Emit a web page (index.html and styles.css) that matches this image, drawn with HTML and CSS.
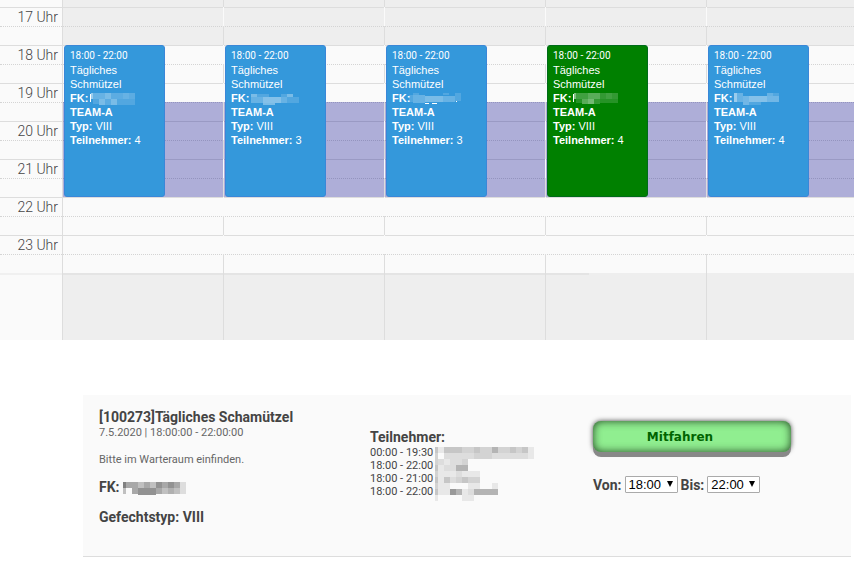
FILE: index.html
```
<!DOCTYPE html>
<html lang="de">

<head>
  <meta charset="UTF-8">
  <meta name="viewport" content="width=device-width, initial-scale=1.0">
  <title>Kalender</title>
  <link rel="stylesheet" href="styles.css">
</head>

<body>
  <div class="calendar">
    <div class="slats">
      <div class="slat rest closed"></div>
      <div class="slat closed"><div class="axis">17 Uhr</div></div>
      <div class="slat"><div class="axis">18 Uhr</div></div>
      <div class="slat"><div class="axis">19 Uhr</div></div>
      <div class="slat"><div class="axis">20 Uhr</div></div>
      <div class="slat"><div class="axis">21 Uhr</div></div>
      <div class="slat"><div class="axis">22 Uhr</div></div>
      <div class="slat"><div class="axis">23 Uhr</div></div>
      <div class="filler"></div>
    </div>
    <hr class="divider">

    <div class="columns">
      <div class="column">
        <div class="bgEvent"></div>
        <a class="event" href="#details">
          <div class="time">18:00 - 22:00</div>
          <div>Tägliches Schmützel</div>
          <div class="leader"><b>FK:</b>
            <svg class="mask" width="45" height="12" viewBox="0 0 45 12" fill="#fff" shape-rendering="crispEdges">
              <path d="M0 1h1v8h-1z" />
              <path d="M1 0h2v6h-2z" opacity=".5" />
              <path d="M3 0h12v6h-12zM33 0h6v6h-6z" opacity=".25" />
              <path d="M15 0h6v6h-6zM9 6h6v6h-6zM21 6h6v6h-6z" opacity=".35" />
              <path d="M21 0h12v6h-12zM15 6h6v6h-6zM39 0h6v6h-6z" opacity=".2" />
              <path d="M3 6h6v5h-6zM27 6h18v6h-18z" opacity=".15" />
            </svg>
          </div>
          <div><b>TEAM-A</b></div>
          <div><b>Typ:</b> VIII</div>
          <div><b>Teilnehmer:</b> 4</div>
        </a>
      </div>
      <div class="column">
        <div class="bgEvent"></div>
        <a class="event" href="#details">
          <div class="time">18:00 - 22:00</div>
          <div>Tägliches Schmützel</div>
          <div class="leader"><b>FK:</b>
            <svg class="mask" width="48" height="12" viewBox="0 0 48 12" fill="#fff" shape-rendering="crispEdges">
              <path d="M0 1h6v3h-6zM36 1h6v3h-6z" opacity=".35" />
              <path d="M0 4h12v6h-12zM30 4h6v6h-6z" opacity=".25" />
              <path d="M12 4h18v6h-18z" opacity=".4" />
              <path d="M36 4h12v6h-12zM6 1h12v3h-12zM30 1h6v3h-6z" opacity=".15" />
              <path d="M12 10h12v2h-12z" opacity=".35" />
            </svg>
          </div>
          <div><b>TEAM-A</b></div>
          <div><b>Typ:</b> VIII</div>
          <div><b>Teilnehmer:</b> 3</div>
        </a>
      </div>
      <div class="column">
        <div class="bgEvent"></div>
        <a class="event" href="#details">
          <div class="time">18:00 - 22:00</div>
          <div>Tägliches Schmützel</div>
          <div class="leader"><b>FK:</b><svg class="mask" width="52" height="12" viewBox="0 0 52 12" fill="#fff" shape-rendering="crispEdges">
              <path d="M0 2h4v7h-4zM4 0h6v2h-6zM34 0h6v2h-6zM46 0h6v8h-6z" opacity=".15" />
              <path d="M4 2h12v8h-12zM34 3h12v6h-12z" opacity=".25" />
              <path d="M16 3h18v6h-18z" opacity=".35" />
              <path d="M16 10h4v1h-4zM23 10h5v1h-5zM47 8h1v1h-1z" />
            </svg>
          </div>
          <div><b>TEAM-A</b></div>
          <div><b>Typ:</b> VIII</div>
          <div><b>Teilnehmer:</b> 3</div>
        </a>
      </div>
      <div class="column">
        <div class="bgEvent"></div>
        <a class="event joined" href="#details">
          <div class="time">18:00 - 22:00</div>
          <div>Tägliches Schmützel</div>
          <div class="leader"><b>FK:</b>
            <svg class="mask" width="45" height="12" viewBox="0 0 45 12" fill="#fff" shape-rendering="crispEdges">
              <path d="M0 1h1v8h-1z" />
              <path d="M1 0h2v6h-2z" opacity=".5" />
              <path d="M3 0h12v6h-12zM33 0h6v6h-6z" opacity=".25" />
              <path d="M15 0h12v6h-12zM9 6h6v5h-6z" opacity=".35" />
              <path d="M27 0h6v6h-6zM21 6h6v5h-6zM39 0h6v6h-6z" opacity=".2" />
              <path d="M15 6h6v5h-6z" opacity=".45" />
              <path d="M3 6h6v4h-6zM27 6h18v4h-18z" opacity=".15" />
            </svg>
          </div>
          <div><b>TEAM-A</b></div>
          <div><b>Typ:</b> VIII</div>
          <div><b>Teilnehmer:</b> 4</div>
        </a>
      </div>
      <div class="column">
        <div class="bgEvent"></div>
        <a class="event" href="#details">
          <div class="time">18:00 - 22:00</div>
          <div>Tägliches Schmützel</div>
          <div class="leader"><b>FK:</b>
            <svg class="mask" width="45" height="12" viewBox="0 0 45 12" fill="#fff" shape-rendering="crispEdges">
              <path d="M0 0h3v9h-3z" opacity=".5" />
              <path d="M3 0h6v9h-6zM33 0h6v3h-6z" opacity=".25" />
              <path d="M9 3h6v9h-6zM33 3h12v6h-12z" opacity=".3" />
              <path d="M15 3h18v6h-18z" opacity=".4" />
              <path d="M15 9h12v3h-12zM39 0h6v3h-6z" opacity=".15" />
            </svg>
          </div>
          <div><b>TEAM-A</b></div>
          <div><b>Typ:</b> VIII</div>
          <div><b>Teilnehmer:</b> 4</div>
        </a>
      </div>
    </div>
  </div>

  <div id="details" class="details">
    <div class="info">
      <h3>[100273]Tägliches Schamützel</h3>
      <div class="date">7.5.2020 | 18:00:00 - 22:00:00</div>
      <p class="note">Bitte im Warteraum einfinden.</p>
      <h3>FK:
        <svg class="nameMask" width="63" height="13" viewBox="0 0 63 13" shape-rendering="crispEdges">
          <path fill="#808080" d="M0 0h3v6h-3z" />
          <path fill="#a8a8a8" d="M3 0h12v6h-12zM21 0h6v6h-6zM39 0h6v6h-6zM51 0h6v6h-6zM9 6h6v6h-6zM33 6h6v6h-6z" />
          <path fill="#c0c0c0" d="M15 0h6v6h-6zM27 0h6v6h-6zM39 6h6v6h-6zM0 6h3v6h-3zM51 6h6v6h-6z" />
          <path fill="#929292" d="M33 0h6v6h-6zM45 0h6v6h-6zM15 6h18v7h-18z" />
          <path fill="#b0b0b0" d="M45 6h6v6h-6z" />
          <path fill="#ddd" d="M57 0h6v12h-6z" />
        </svg>
      </h3>
      <h3>Gefechtstyp: VIII</h3>
    </div>

    <div class="members">
      <h3>Teilnehmer:</h3>
      <div class="memberList">
        <ul>
          <li>00:00 - 19:30</li>
          <li>18:00 - 22:00</li>
          <li>18:00 - 21:00</li>
          <li>18:00 - 22:00</li>
        </ul>
        <svg width="99" height="54" viewBox="0 0 99 54" fill="none" stroke-width="6" shape-rendering="crispEdges">
          <path stroke="#e8e8e8" d="M3 3h6M93 3h6M93 9h6M9 15h6M3 21h6M3 27h18M27 27h18M3 33h6M3 39h6M9 39h6M33 39h12M57 39h6M3 45h6M9 45h6M27 45h6M0 51h3M27 51h12" />
          <path stroke="#ddd" d="M9 9h12M21 9h18M57 9h36M15 15h12M9 21h12M21 27h6M15 33h6M33 45h6M3 15h6" />
          <path stroke="#d3d3d3" d="M0 9h3M27 3h12M45 3h12M63 3h6M69 3h6M81 3h6M39 9h18M27 15h6M0 15h3M21 33h6M33 33h12M0 27h3M0 39h3" />
          <path stroke="#c6c6c6" d="M0 3h3M9 3h18M39 3h6M75 3h6M87 3h6M0 21h3M9 33h6M27 33h6M0 33h3M0 45h3" />
          <path stroke="#b4b4b4" d="M57 3h6M21 21h12M39 45h24M21 45h6" />
          <path stroke="#999" d="M15 45h6" />
        </svg>
      </div>
    </div>

    <form class="join">
      <button type="button">Mitfahren</button>
      <div class="range">
        <label for="from">Von:</label>
        <span class="selectWrapper"><select id="from"><option>18:00</option></select></span>
        <label for="to">Bis:</label>
        <span class="selectWrapper"><select id="to"><option>22:00</option></select></span>
      </div>
    </form>
  </div>
</body>

</html>
```
FILE: styles.css
```
* {
  box-sizing: border-box;
  padding: 0;
  margin: 0;
}

body {
  color: #444;
  background: #fff;
  font-family: Roboto, 'Liberation Sans', sans-serif;
  font-size: 14px;
}

/* calendar */
.calendar {
  position: relative;
  overflow: hidden;
  background: #fafafa;
}

.slat {
  position: relative;
  height: 38px;
  border-top: 1px solid #ddd;
}

.slat.rest {
  height: 7px;
  border-top: 0;
}

.slat::after {
  content: '';
  position: absolute;
  top: 18px;
  left: 0;
  right: 0;
  border-top: 1px dotted #d4d4d4;
}

.slat.rest::after {
  display: none;
}

.slat.closed,
.filler {
  background: linear-gradient(to right, #fafafa 62px, #eee 62px);
}

.axis {
  width: 62px;
  padding-right: 4px;
  font-weight: 300;
  line-height: 18px;
  text-align: right;
}

.filler {
  height: 67px;
}

.divider {
  position: absolute;
  bottom: 65px;
  left: 0;
  width: 69%;
  height: 2px;
  border: 0;
  background: rgba(0, 0, 0, .04);
}

.columns {
  position: absolute;
  top: 0;
  bottom: 0;
  left: 62px;
  right: -13px;
  display: grid;
  grid-template-columns: repeat(5, 1fr);
}

/* the column line fades out in the first half of every hour */
.column {
  position: relative;
  padding: 45px 58px 0 2px;
  background:
    linear-gradient(#ddd, #ddd) left bottom / 1px 67px no-repeat,
    repeating-linear-gradient(#fafafa 0 19px, #ddd 19px 38px) left 7px / 1px 266px no-repeat,
    linear-gradient(#ddd, #ddd) left top / 1px 7px no-repeat;
}

.column:first-child {
  background: linear-gradient(#ddd, #ddd) left top / 1px 100% no-repeat;
}

.bgEvent {
  position: absolute;
  top: 102px;
  left: 1px;
  right: 0;
  height: 95px;
  background: darkblue;
  opacity: .3;
}

.event {
  position: relative;
  display: block;
  height: 152px;
  padding: 3px 5px;
  border: 1px solid #3a87d8;
  border-radius: 3px;
  color: #fff;
  background: #3498db;
  font-family: 'Liberation Sans', Arial, sans-serif;
  font-size: 11px;
  line-height: 14px;
  text-decoration: none;
}

.event.joined {
  border-color: #006b1a;
  background: green;
}

.event .time {
  font-family: Roboto, sans-serif;
  font-size: 10px;
}

.event .leader {
  height: 14px;
  white-space: nowrap;
}

.mask {
  margin: 2px 0 0 -1px;
  vertical-align: top;
}

/* details */
.details {
  display: flex;
  min-height: 162px;
  margin: 55px 3px 0 83px;
  padding: 13px 16px;
  border-bottom: 1px solid #ddd;
  background: #fafafa;
}

.details h3 {
  font-size: 14px;
  line-height: 18px;
}

.info {
  flex: 0 0 271px;
}

.info h3 + h3 {
  margin-top: 12px;
}

.date,
.note {
  color: #666;
  font-size: 11px;
  line-height: 14px;
}

.note {
  margin: 13px 0 11px;
}

.nameMask {
  margin-top: 4px;
  vertical-align: top;
}

.members {
  flex: 0 0 223px;
  padding-top: 20px;
}

.memberList {
  display: flex;
  gap: 2px;
}

.members ul {
  list-style: none;
  font-size: 11px;
  line-height: 13px;
}

.members svg {
  margin-top: 1px;
}

.join {
  padding-top: 13px;
}

.join button {
  display: block;
  width: 198px;
  height: 31px;
  padding-right: 24px;
  border: 0;
  border-radius: 8px;
  color: darkgreen;
  background: lightgreen;
  box-shadow: 0 5px 0 #888, 0 0 5px #444, inset 0 0 8px #242;
  font: bold 12px 'DejaVu Sans', sans-serif;
}

.range {
  display: flex;
  align-items: center;
  gap: 3px;
  margin-top: 24px;
}

.range label {
  font-weight: bold;
}

.selectWrapper {
  position: relative;
}

.selectWrapper::after {
  content: '';
  position: absolute;
  top: 5px;
  right: 5px;
  border: 3px solid transparent;
  border-top: 6px solid #000;
  border-bottom: 0;
  pointer-events: none;
}

.range select {
  display: block;
  appearance: none;
  width: 53px;
  height: 17px;
  padding-left: 3px;
  border: 1px solid #aaa;
  border-radius: 1px;
  color: #000;
  background: #fff;
  font: 13px 'Liberation Sans', Arial, sans-serif;
}
```
